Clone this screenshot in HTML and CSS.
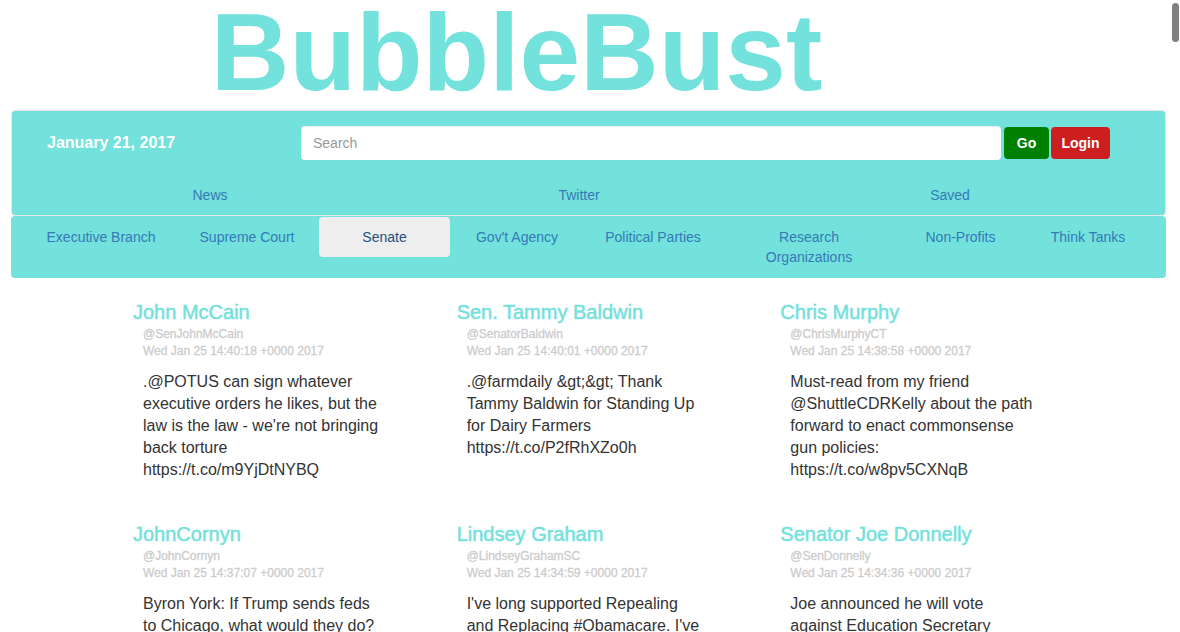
FILE: index.html
```html
<!DOCTYPE html>
<html lang="en">
<head>
<meta charset="utf-8">
<title>BubbleBust</title>
<link rel="stylesheet" href="styles.css">
</head>
<body>
<div class="page">
  <header>
    <h1 class="brand">BubbleBust</h1>
    <div class="navbar">
      <form class="search-row">
        <strong class="date">January 21, 2017</strong>
        <input class="search" type="text" placeholder="Search" aria-label="Search">
        <button class="btn btn-go" type="button">Go</button>
        <button class="btn btn-login" type="button">Login</button>
      </form>
      <nav class="sections">
        <a href="#news">News</a>
        <a href="#twitter">Twitter</a>
        <a href="#saved">Saved</a>
      </nav>
    </div>
    <nav class="categories">
      <a href="#executive">Executive Branch</a>
      <a href="#court">Supreme Court</a>
      <a class="active" href="#senate">Senate</a>
      <a href="#agency">Gov't Agency</a>
      <a href="#parties">Political Parties</a>
      <a href="#research">Research Organizations</a>
      <a href="#nonprofits">Non-Profits</a>
      <a href="#thinktanks">Think Tanks</a>
    </nav>
  </header>
  <main class="feed">
    <article class="tweet">
      <h2>John McCain</h2>
      <p class="meta">@SenJohnMcCain</p>
      <p class="meta">Wed Jan 25 14:40:18 +0000 2017</p>
      <p class="text">.@POTUS can sign whatever executive orders he likes, but the law is the law - we're not bringing back torture<br>https://t.co/m9YjDtNYBQ</p>
    </article>
    <article class="tweet">
      <h2>Sen. Tammy Baldwin</h2>
      <p class="meta">@SenatorBaldwin</p>
      <p class="meta">Wed Jan 25 14:40:01 +0000 2017</p>
      <p class="text">.@farmdaily &amp;gt;&amp;gt; Thank Tammy Baldwin for Standing Up for Dairy Farmers<br>https://t.co/P2fRhXZo0h</p>
    </article>
    <article class="tweet">
      <h2>Chris Murphy</h2>
      <p class="meta">@ChrisMurphyCT</p>
      <p class="meta">Wed Jan 25 14:38:58 +0000 2017</p>
      <p class="text">Must-read from my friend @ShuttleCDRKelly about the path forward to enact commonsense gun policies:<br>https://t.co/w8pv5CXNqB</p>
    </article>
    <article class="tweet">
      <h2>JohnCornyn</h2>
      <p class="meta">@JohnCornyn</p>
      <p class="meta">Wed Jan 25 14:37:07 +0000 2017</p>
      <p class="text">Byron York: If Trump sends feds<br>to Chicago, what would they do?</p>
    </article>
    <article class="tweet">
      <h2>Lindsey Graham</h2>
      <p class="meta">@LindseyGrahamSC</p>
      <p class="meta">Wed Jan 25 14:34:59 +0000 2017</p>
      <p class="text">I've long supported Repealing<br>and Replacing #Obamacare. I've</p>
    </article>
    <article class="tweet">
      <h2>Senator Joe Donnelly</h2>
      <p class="meta">@SenDonnelly</p>
      <p class="meta">Wed Jan 25 14:34:36 +0000 2017</p>
      <p class="text">Joe announced he will vote<br>against Education Secretary</p>
    </article>
  </main>
  <div class="scroll-thumb"></div>
</div>
</body>
</html>
```
FILE: styles.css
```css
* {
  box-sizing: border-box;
}

body {
  margin: 0;
  background: #fff;
  color: #333;
  font: 14px/20px "Helvetica Neue", Helvetica, "Liberation Sans", Arial, sans-serif;
}

.page {
  height: 100vh;
  overflow: hidden;
  padding: 0 14px 0 11px;
}

h1, h2, p {
  margin: 0;
}

a {
  color: #337ab7;
  text-decoration: none;
}

.brand {
  padding: 0 144px 6px 0;
  color: #73e1dc;
  font-size: 109px;
  font-weight: 700;
  line-height: 104px;
  text-align: center;
}

.navbar,
.categories {
  background: #73e1dc;
  border-radius: 4px;
}

.navbar {
  padding: 15px 30px 0 15px;
  border: 1px solid #e7e7e7;
}

.search-row {
  display: flex;
  align-items: center;
  padding: 0 25px 0 20px;
}

.date {
  width: 254px;
  color: #fff;
  font-size: 16px;
}

.search {
  flex: 1;
  min-width: 0;
  height: 34px;
  margin-right: 3px;
  padding: 6px 12px;
  border: 0;
  border-radius: 4px;
  background: #fff;
  box-shadow: inset 0 1px 1px rgba(0, 0, 0, 0.08);
  font: inherit;
}

.search::placeholder {
  color: #999;
  opacity: 1;
}

.btn {
  height: 32px;
  padding: 0 12px;
  border: 0;
  border-radius: 4px;
  color: #fff;
  font: inherit;
  font-weight: 700;
}

.btn-go {
  width: 45px;
  margin-right: 2px;
  background: #008000;
}

.btn-login {
  width: 59px;
  padding: 0;
  background: #cd1f20;
}

.sections {
  display: grid;
  grid-template-columns: 366fr 372fr 370fr;
  padding-top: 15px;
}

.sections a,
.categories a {
  padding: 10px 15px;
  border-radius: 4px;
  text-align: center;
}

.categories {
  display: grid;
  grid-template-columns: 148fr 144fr 131fr 134fr 138fr 174fr 129fr 126fr;
  align-items: start;
  padding: 1px 15px 1px 16px;
}

.categories .active {
  background: #eee;
  color: #23527c;
}

.feed {
  display: grid;
  grid-template-columns: repeat(3, 1fr);
  row-gap: 41px;
  padding: 22px 62px 0 122px;
}

.tweet h2 {
  padding-bottom: 2px;
  color: #73e1dc;
  font-size: 20px;
  font-weight: 400;
  line-height: 24px;
  -webkit-text-stroke: 0.5px #73e1dc;
}

.meta {
  padding-left: 10px;
  color: #ccc;
  font-size: 12px;
  line-height: 17px;
  -webkit-text-stroke: 0.3px #ccc;
}

.text {
  max-width: 260px;
  padding: 11px 0 0 10px;
  font-size: 16px;
  line-height: 22px;
}

.scroll-thumb {
  position: fixed;
  top: 3px;
  right: 1px;
  width: 7px;
  height: 39px;
  border-radius: 4px;
  background: #808080;
}
```
